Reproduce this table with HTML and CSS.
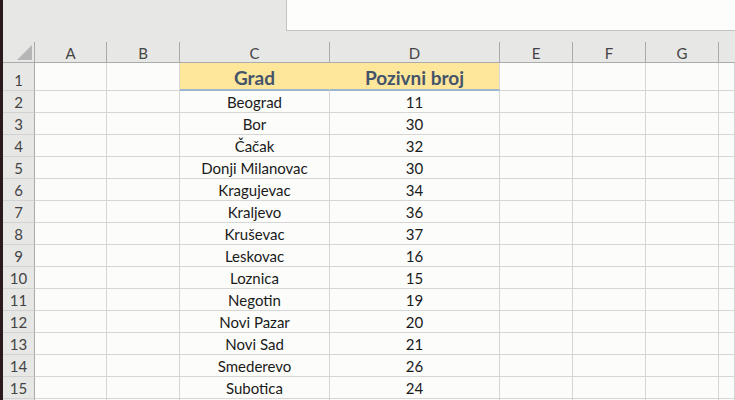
FILE: index.html
```html
<!DOCTYPE html>
<html>
<head>
<meta charset="utf-8">
<link rel="stylesheet" href="styles.css">
</head>
<body>
<div class="app">
  <div class="edge"></div>
  <div class="main">
    <div class="topbar"><div class="formula"></div></div>
    <div class="sheet">
      <div class="corner"><span class="tri"></span></div>
      <div class="ch">A</div><div class="ch">B</div><div class="ch">C</div><div class="ch">D</div><div class="ch">E</div><div class="ch">F</div><div class="ch">G</div><div class="ch last"></div>

      <div class="rh r1">1</div><div class="c r1"></div><div class="c r1"></div><div class="c r1 h1 h1l">Grad</div><div class="c r1 h1">Pozivni broj</div><div class="c r1"></div><div class="c r1"></div><div class="c r1"></div><div class="c r1"></div>

      <div class="rh">2</div><div class="c"></div><div class="c"></div><div class="c t">Beograd</div><div class="c t">11</div><div class="c"></div><div class="c"></div><div class="c"></div><div class="c"></div>
      <div class="rh">3</div><div class="c"></div><div class="c"></div><div class="c t">Bor</div><div class="c t">30</div><div class="c"></div><div class="c"></div><div class="c"></div><div class="c"></div>
      <div class="rh">4</div><div class="c"></div><div class="c"></div><div class="c t">Čačak</div><div class="c t">32</div><div class="c"></div><div class="c"></div><div class="c"></div><div class="c"></div>
      <div class="rh">5</div><div class="c"></div><div class="c"></div><div class="c t">Donji Milanovac</div><div class="c t">30</div><div class="c"></div><div class="c"></div><div class="c"></div><div class="c"></div>
      <div class="rh">6</div><div class="c"></div><div class="c"></div><div class="c t">Kragujevac</div><div class="c t">34</div><div class="c"></div><div class="c"></div><div class="c"></div><div class="c"></div>
      <div class="rh">7</div><div class="c"></div><div class="c"></div><div class="c t">Kraljevo</div><div class="c t">36</div><div class="c"></div><div class="c"></div><div class="c"></div><div class="c"></div>
      <div class="rh">8</div><div class="c"></div><div class="c"></div><div class="c t">Kruševac</div><div class="c t">37</div><div class="c"></div><div class="c"></div><div class="c"></div><div class="c"></div>
      <div class="rh">9</div><div class="c"></div><div class="c"></div><div class="c t">Leskovac</div><div class="c t">16</div><div class="c"></div><div class="c"></div><div class="c"></div><div class="c"></div>
      <div class="rh">10</div><div class="c"></div><div class="c"></div><div class="c t">Loznica</div><div class="c t">15</div><div class="c"></div><div class="c"></div><div class="c"></div><div class="c"></div>
      <div class="rh">11</div><div class="c"></div><div class="c"></div><div class="c t">Negotin</div><div class="c t">19</div><div class="c"></div><div class="c"></div><div class="c"></div><div class="c"></div>
      <div class="rh">12</div><div class="c"></div><div class="c"></div><div class="c t">Novi Pazar</div><div class="c t">20</div><div class="c"></div><div class="c"></div><div class="c"></div><div class="c"></div>
      <div class="rh">13</div><div class="c"></div><div class="c"></div><div class="c t">Novi Sad</div><div class="c t">21</div><div class="c"></div><div class="c"></div><div class="c"></div><div class="c"></div>
      <div class="rh">14</div><div class="c"></div><div class="c"></div><div class="c t">Smederevo</div><div class="c t">26</div><div class="c"></div><div class="c"></div><div class="c"></div><div class="c"></div>
      <div class="rh">15</div><div class="c"></div><div class="c"></div><div class="c t">Subotica</div><div class="c t">24</div><div class="c"></div><div class="c"></div><div class="c"></div><div class="c"></div>
      <div class="rh"></div><div class="c"></div><div class="c"></div><div class="c"></div><div class="c"></div><div class="c"></div><div class="c"></div><div class="c"></div><div class="c"></div>
    </div>
  </div>
</div>
</body>
</html>
```

FILE: styles.css
```css
* { box-sizing: border-box; }
html, body { margin: 0; padding: 0; }
body {
  width: 735px;
  height: 400px;
  overflow: hidden;
  background: #e7e7e6;
  font-family: "Lato", "Liberation Sans", sans-serif;
}
.app {
  display: flex;
  height: 400px;
  overflow: hidden;
}
.edge {
  flex: 0 0 3px;
  background: #2a1a1e;
}
.main {
  flex: 1 1 auto;
  display: flex;
  flex-direction: column;
  min-width: 0;
}
.topbar {
  flex: 0 0 42px;
  height: 42px;
  display: flex;
  justify-content: flex-end;
  align-items: flex-start;
}
.formula {
  width: 449px;
  height: 31px;
  background: #fdfefc;
  border-left: 1px solid #c3c3c3;
  border-bottom: 1px solid #c3c3c3;
}
.sheet {
  flex: 0 0 auto;
  display: grid;
  grid-template-columns: 32px 72px 73px 150px 170px 73px 73px 73px 1fr;
  grid-template-rows: 21px 28px repeat(15, 22px);
}
.corner {
  position: relative;
  background: #e7e7e6;
  border-right: 1px solid #ababab;
  border-bottom: 1px solid #ababab;
}
.tri {
  position: absolute;
  right: 2px;
  bottom: 2px;
  width: 0;
  height: 0;
  border-left: 15px solid transparent;
  border-bottom: 15px solid #b5b5b5;
}
.ch {
  background: #e7e7e6;
  border-right: 1px solid #ababab;
  border-bottom: 1px solid #ababab;
  color: #444;
  font-size: 15px;
  display: flex;
  align-items: center;
  justify-content: center;
  padding-top: 1px;
}
.ch.last { border-right: none; }
.rh {
  background: #e7e7e6;
  border-right: 1px solid #ababab;
  border-bottom: 1px solid #d2d2d2;
  color: #444;
  font-size: 15px;
  display: flex;
  align-items: flex-end;
  justify-content: center;
  padding-bottom: 1px;
}
.c {
  background: #fcfdfb;
  border-right: 1px solid #d6d6d6;
  border-bottom: 1px solid #d6d6d6;
}
.t {
  font-size: 15px;
  color: #1a1a1a;
  display: flex;
  align-items: flex-end;
  justify-content: center;
  padding-bottom: 1px;
}
.h1 {
  background: #fee69a;
  border-bottom: 2px solid #9fb6cf;
  color: #44546a;
  font-weight: bold;
  font-size: 19px;
  display: flex;
  align-items: flex-end;
  justify-content: center;
  padding-bottom: 0;
}
.h1l { border-right-color: #fee69a; }
```
